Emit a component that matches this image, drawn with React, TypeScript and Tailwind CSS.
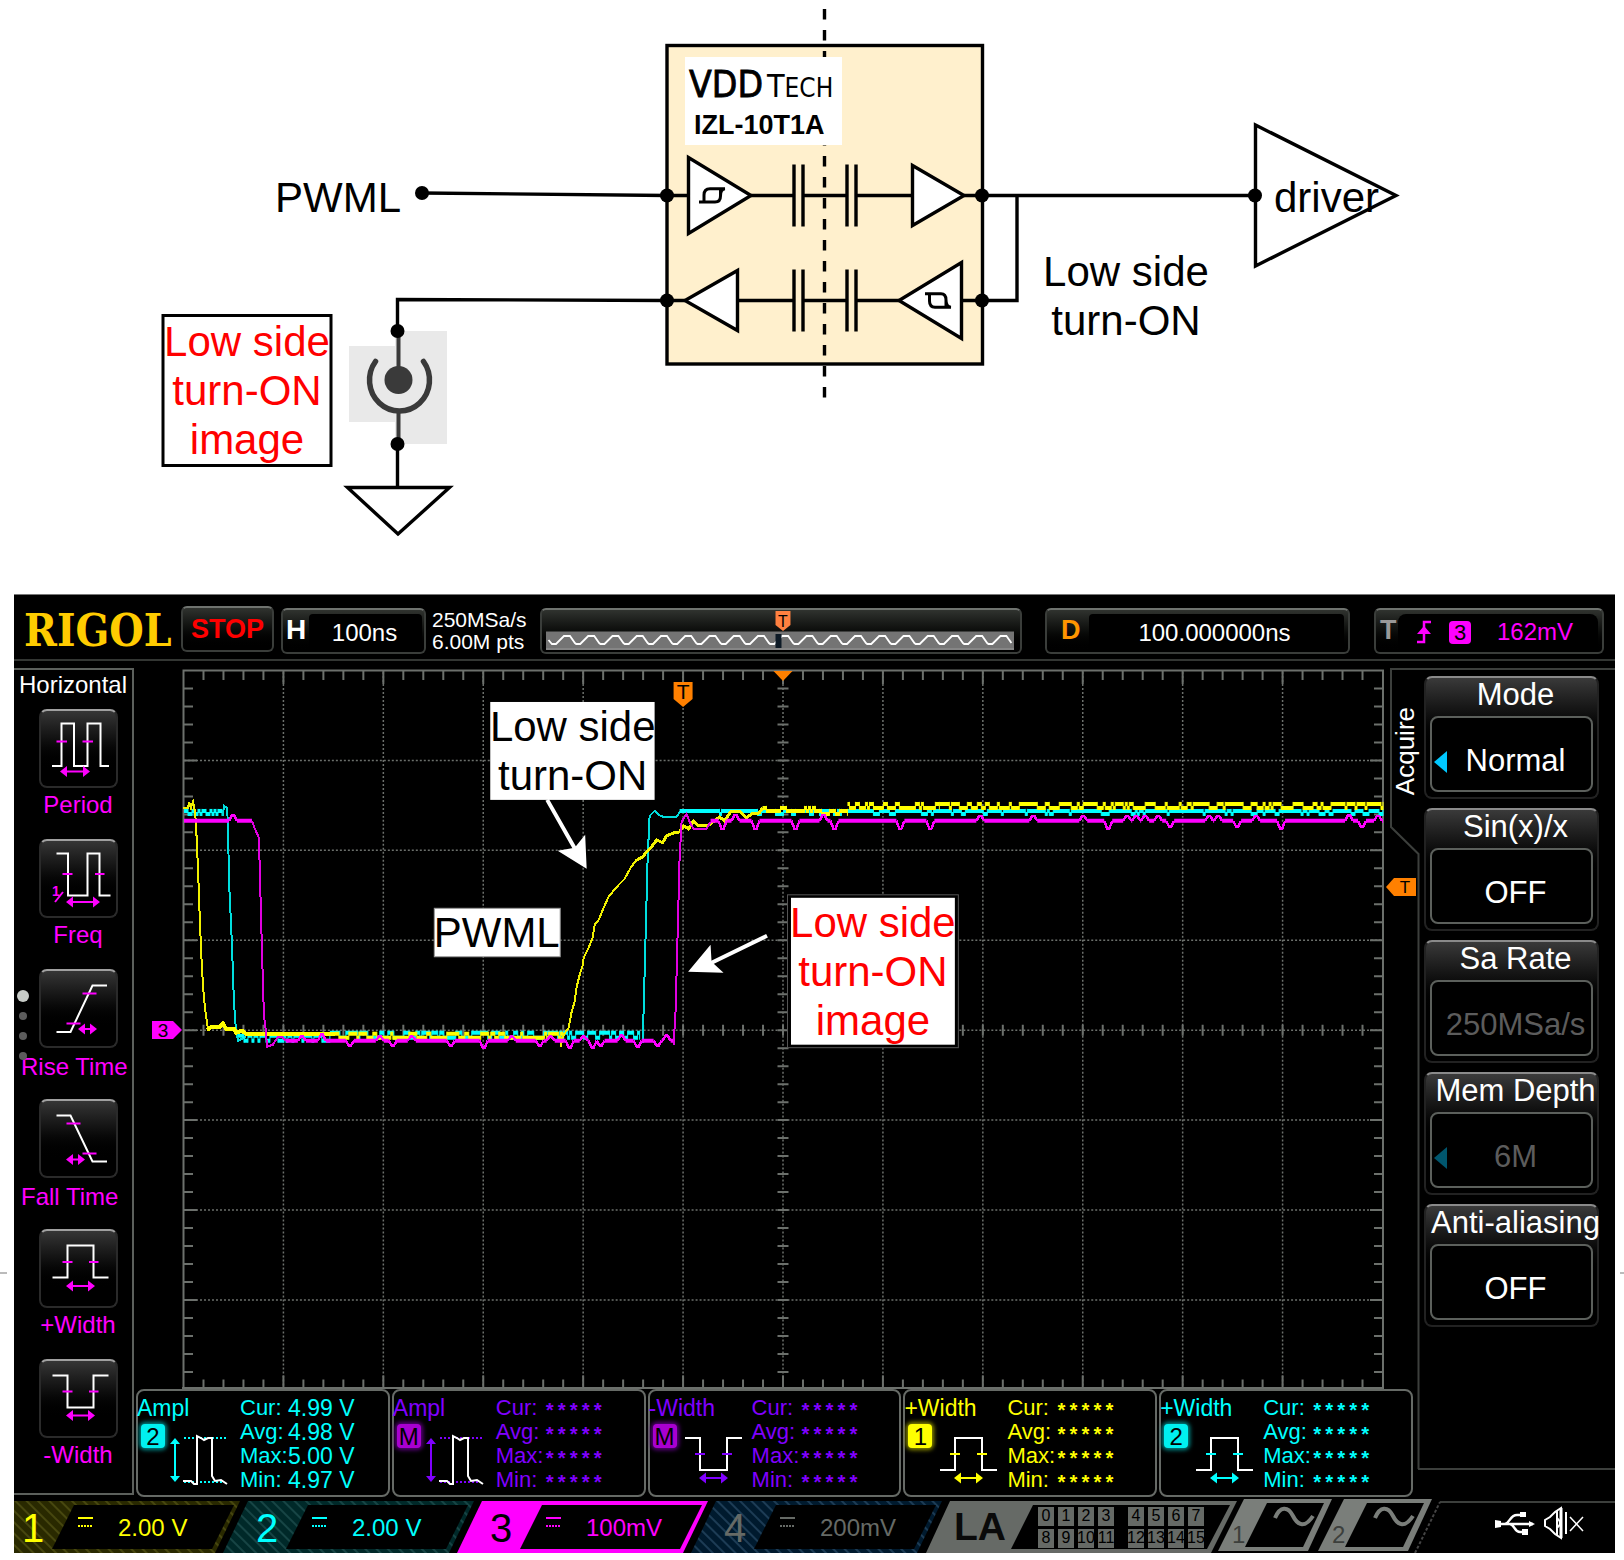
import React from "react";

const ARIAL = "font-['Liberation_Sans',Arial,sans-serif]";

/* ---------- circuit diagram ---------- */

function Node({ x, y }: { x: number; y: number }) {
  return <circle cx={x} cy={y} r={7} fill="#000" />;
}

function Capacitors({ y }: { y: number }) {
  return (
    <path d={`M794 ${y - 31}V${y + 31}M803 ${y - 31}V${y + 31}M847 ${y - 31}V${y + 31}M856 ${y - 31}V${y + 31}M803 ${y}H847`} />
  );
}

function Circuit() {
  return (
    <svg viewBox="0 0 1624 594" className={`block h-auto w-full ${ARIAL}`} role="img" aria-label="Isolator circuit">
      <rect x="667" y="45.5" width="315.5" height="318.5" fill="#fff0cd" stroke="#000" strokeWidth="3.4" />
      <path d="M824.5 9V398" stroke="#000" strokeWidth="3.4" strokeDasharray="10.5 10.5" />
      <rect x="685" y="57" width="157" height="88" fill="#fff" />
      <text x="689" y="97" fontSize="37" fill="#000" stroke="#000" strokeWidth="0.8" className="font-['DejaVu_Sans_Condensed',Roboto,sans-serif]">
        VDD
      </text>
      <text x="767" y="97" fontSize="32" fill="#000" className="font-['DejaVu_Sans_Condensed',Roboto,sans-serif]">
        T<tspan fontSize="26">ECH</tspan>
      </text>
      <text x="694" y="134" fontSize="27" fontWeight="700">IZL-10T1A</text>

      <g fill="none" stroke="#000" strokeWidth="3.4">
        <path d="M422 193L667 195.5H688M751 195.5H794M856 195.5H912M964 195.5H1255M1017 195.5V300.5H962M899 300.5H856M794 300.5H737M685 300.5H667L397.5 299.5V331M397.500 444V487" />
        <Capacitors y={195.500} />
        <Capacitors y={300.500} />
        <g fill="#fff">
          <path d="M688.500 157.500V233.500L751 195.500Z" />
          <path d="M912.500 165.500V225.500L964 195.500Z" />
          <path d="M737.500 270.500V330.500L685 300.500Z" />
          <path d="M961.500 262.500V338.500L899 300.500Z" />
          <path d="M347.500 487.500H449.500L398 534Z" />
        </g>
        <path d="M1255.500 125V266L1396 195.500Z" />
        <path strokeWidth="3" d="M699 202H715Q720.500 202 720.500 196Q720.500 189 725 188.700H710Q704 188.700 704 195V202M720.500 196V188.700" />
        <path strokeWidth="3" d="M925 293.700H941Q946 293.700 946 300Q946 307 951 307.300H935Q929.500 307 929.500 301V293.700M946 300V307.300" />
      </g>

      <rect x="349" y="346" width="47" height="76" fill="#e9e9e9" />
      <rect x="395" y="331" width="52" height="113" fill="#e9e9e9" />
      <g fill="none" stroke="#3a3a3a" strokeLinecap="round">
        <path d="M398.500 331V370M398.500 412V444" strokeWidth="4" />
        <path d="M375.500 361.500A30 31 0 1 0 423.500 361.500" strokeWidth="5.500" />
      </g>
      <circle cx="398.500" cy="380" r="14" fill="#3a3a3a" />

      <Node x={422} y={193} />
      <Node x={667} y={195.500} />
      <Node x={982} y={195.500} />
      <Node x={667} y={300.500} />
      <Node x={982} y={300.500} />
      <Node x={1255} y={195.500} />
      <Node x={397.500} y={331} />
      <Node x={397.500} y={444} />

      <rect x="163" y="315.500" width="168" height="150" fill="#fff" stroke="#000" strokeWidth="3" />
      <g fontSize="42">
        <text x="275" y="212">PWML</text>
        <text x="1274" y="212">driver</text>
        <g textAnchor="middle">
          <text x="1126" y="286">Low side</text>
          <text x="1126" y="335">turn-ON</text>
          <g fill="#f00">
            <text x="247" y="356">Low side</text>
            <text x="247" y="405">turn-ON</text>
            <text x="247" y="454">image</text>
          </g>
        </g>
      </g>
    </svg>
  );
}

/* ---------- waveform traces ---------- */

type Pt = [number, number];

function makeRandom(seed: number) {
  let s = seed;
  return () => {
    s = (s * 1103515245 + 12345) % 2147483648;
    return s / 2147483648;
  };
}

/* A noisy flat stretch: thick level segments joined by thin verticals. */
function noise(x0: number, x1: number, hi: number, lo: number, hiShare: number, seed: number, maxRun = 9): { thick: string; thin: string } {
  const rnd = makeRandom(seed);
  let x = x0;
  let up = true;
  let thick = "";
  let thin = "";
  while (x < x1) {
    const share = up ? hiShare : 1 - hiShare;
    const run = Math.min(x1 - x, 2 * Math.ceil(rnd() * rnd() * maxRun * share * 2 + 0.3));
    const y = up ? hi : lo;
    thick += `M${x} ${y}H${x + run}`;
    x += run;
    thin += `M${x} ${hi - 2}V${lo + 2}`;
    up = !up;
  }
  return { thick, thin };
}

function Flat({ color, ...p }: { color: string; x0: number; x1: number; hi: number; lo: number; share: number; seed: number; run?: number }) {
  const n = noise(p.x0, p.x1, p.hi, p.lo, p.share, p.seed, p.run);
  return (
    <g fill="none" stroke={color}>
      <path d={n.thick} strokeWidth="4" />
      <path d={n.thin} strokeWidth="1" />
    </g>
  );
}

function Edge({ pts, color, width = 2 }: { pts: Pt[]; color: string; width?: number }) {
  return <polyline points={pts.map((p) => p.join(",")).join(" ")} fill="none" stroke={color} strokeWidth={width} shapeRendering="crispEdges" />;
}

/* A level line with short spikes at the given places. */
function Spiky({ from, to, y, spikes }: { from: number; to: number; y: number; spikes: Pt[] }) {
  let flat = "";
  let peaks = "";
  let x = from;
  spikes.forEach(([sx, sy]) => {
    flat += `M${x} ${y}H${sx - 4}`;
    peaks += `M${sx - 4} ${y}L${sx - 1} ${sy}H${sx + 1}L${sx + 4} ${y}`;
    x = sx + 4;
  });
  flat += `M${x} ${y}H${to}`;
  return (
    <g fill="none" stroke="#f0f">
      <path d={flat} strokeWidth="4" />
      <path d={peaks} strokeWidth="2.500" shapeRendering="crispEdges" />
    </g>
  );
}

const yellowFall: Pt[] = [[183, 808], [188, 808], [189, 802], [191, 808], [193, 802], [195, 812], [196, 824], [198, 869], [200, 924], [202, 970], [204, 999], [206, 1016], [208, 1030]];
const yellowRise: Pt[] = [[561, 1047], [563, 1037], [566, 1032], [569, 1028], [572, 1012], [575, 1002], [577, 987], [580, 975], [583, 966], [584, 958], [589, 948], [593, 938], [595, 925], [599, 920], [604, 908], [609, 897], [613, 892], [620, 884], [625, 879], [631, 868], [636, 861]];
const yellowKnee: Pt[] = [[636, 861], [643, 857], [647, 852], [652, 847], [657, 840], [663, 843], [667, 836], [674, 833], [680, 832], [684, 826], [689, 829], [694, 821], [699, 826], [708, 826], [720, 817], [725, 821], [731, 812], [741, 812], [747, 818], [752, 814], [760, 813], [763, 808]];
const cyanFall: Pt[] = [[223, 816], [224, 806], [227, 808], [228, 824], [229, 880], [232, 945], [234, 1003], [236, 1030], [238, 1041], [246, 1037]];
const cyanRise: Pt[] = [[643, 1043], [644, 1011], [646, 936], [648, 859], [650, 816], [655, 811], [659, 815], [664, 817], [669, 817], [677, 817], [681, 811]];
const magentaFall: Pt[] = [[252, 821], [255, 829], [259, 838], [260, 877], [262, 950], [264, 1016], [266, 1032], [267, 1047], [273, 1045], [278, 1037], [282, 1037], [286, 1041]];
const magentaRise: Pt[] = [[674, 1045], [676, 1011], [678, 936], [680, 859], [682, 822], [687, 814], [690, 822], [694, 829], [707, 829], [711, 822]];
const highSpikes: Pt[] = [[723, 829], [736, 815], [756, 829], [796, 829], [824, 815], [835, 829], [901, 829], [931, 829], [981, 816], [1034, 816], [1084, 816], [1109, 829], [1128, 816], [1137, 816], [1146, 816], [1159, 816], [1171, 827], [1210, 816], [1219, 816], [1238, 827], [1257, 816], [1282, 829], [1350, 815], [1363, 827], [1379, 816]];
const lowSpikes: Pt[] = [[302, 1037], [322, 1035], [350, 1046], [380, 1037], [393, 1046], [412, 1037], [451, 1046], [484, 1048], [512, 1037], [540, 1046], [551, 1037], [570, 1048], [584, 1037], [593, 1048], [601, 1046], [622, 1036], [638, 1047], [658, 1046], [667, 1036]];

function Graticule() {
  let ticks = "";
  for (let x = 183.500 + 20, i = 1; i < 60; x += 20, i++) {
    const len = i % 5 === 0 ? 13 : 9;
    ticks += `M${x} 671V${671 + len}M${x} 1389V${1389 - len}M${x} 1025V1036`;
  }
  for (let y = 688, i = 1; i < 40; y += 18, i++) {
    const len = i % 5 === 0 ? 13 : 9;
    ticks += `M184 ${y + 0.500}H${184 + len}M1384 ${y + 0.500}H${1384 - len}M778 ${y + 0.500}H789`;
  }
  let dots = "";
  for (let i = 1; i < 12; i++) dots += `M${183.500 + i * 100} 672V1389`;
  for (let i = 1; i < 8; i++) dots += `M184 ${670.500 + i * 90}H1384`;
  return (
    <g fill="none" stroke="#6c706c">
      <path d={dots} strokeWidth="1.500" strokeDasharray="2 2" />
      <path d={ticks} strokeWidth="2" />
      <path d="M183.500 1390V670.500H1384V1390" strokeWidth="2" />
      <path d="M182 1389H1385" strokeWidth="3" />
    </g>
  );
}

function Plot() {
  return (
    <svg viewBox="182 668 1203 722" className={`block h-auto w-full min-w-0 flex-1 ${ARIAL}`} role="img" aria-label="Oscilloscope waveforms">
      <Graticule />
      <path d="M774 671H793L783.500 681Z" fill="#ff8000" />
      <path d="M674 682H693V699L683.500 707L674 699Z" fill="#ff8000" />
      <text x="683.500" y="699" fontSize="21" textAnchor="middle">T</text>

      <Flat color="#0ff" x0={184} x1={222} hi={811} lo={814} share={0.500} seed={5} run={5} />
      <Edge pts={cyanFall} color="#0dd" />
      <Flat color="#0ff" x0={238} x1={330} hi={1036} lo={1041} share={0.500} seed={9} />
      <Flat color="#0ff" x0={330} x1={640} hi={1033} lo={1038} share={0.500} seed={21} />
      <Edge pts={cyanRise} color="#0dd" />
      <Flat color="#0ff" x0={680} x1={1384} hi={811} lo={814} share={0.850} seed={33} run={14} />

      <Edge pts={yellowFall} color="#f0f000" />
      <Edge pts={[[207, 1030], [212, 1027], [220, 1027], [223, 1024], [226, 1029], [234, 1029], [236, 1033], [242, 1031], [246, 1034], [335, 1034]]} color="#ff0" width={4} />
      <Flat color="#ff0" x0={335} x1={563} hi={1034} lo={1038} share={0.350} seed={14} run={12} />
      <Edge pts={yellowRise} color="#f0f000" />
      <Edge pts={yellowKnee} color="#f4f400" width={3} />
      <Flat color="#ff0" x0={763} x1={816} hi={808} lo={811} share={0.400} seed={7} />
      <Flat color="#ff0" x0={816} x1={848} hi={811} lo={814} share={0.800} seed={3} run={14} />
      <Flat color="#ff0" x0={848} x1={940} hi={804} lo={808} share={0.350} seed={2} run={6} />
      <Flat color="#ff0" x0={940} x1={1384} hi={804} lo={808} share={0.600} seed={17} run={9} />

      <Spiky from={184} to={252} y={821} spikes={[[233, 815]]} />
      <Edge pts={magentaFall} color="#e000e0" />
      <Spiky from={286} to={674} y={1041} spikes={lowSpikes} />
      <Edge pts={magentaRise} color="#e000e0" />
      <Spiky from={711} to={1384} y={821} spikes={highSpikes} />

      <g stroke="#fff" strokeWidth="4" fill="#fff">
        <path d="M547.500 800L577 852M767.500 936L710 964" />
        <path stroke="none" d="M587 869L558 851L575 848L585.500 835ZM688.500 972L711 945L712 962L724 973Z" />
      </g>
      <rect x="490.500" y="702" width="164.500" height="98" fill="#fff" />
      <rect x="434.500" y="908.500" width="126" height="48.500" fill="#fff" stroke="#999" strokeWidth="1" />
      <rect x="788" y="895" width="171" height="153" fill="#000" stroke="#555" strokeWidth="1" />
      <rect x="791.500" y="898" width="164" height="147" fill="#fff" />
      <g fontSize="42" textAnchor="middle">
        <text x="573" y="741">Low side</text>
        <text x="573" y="790">turn-ON</text>
        <text x="497" y="947">PWML</text>
        <g fill="#f00">
          <text x="873.500" y="937">Low side</text>
          <text x="873.500" y="986">turn-ON</text>
          <text x="873.500" y="1035">image</text>
        </g>
      </g>
    </svg>
  );
}

/* ---------- header ---------- */

const PANEL = "rounded-md border-2 border-[#3a3d3a] border-t-[#6f736f] bg-gradient-to-b from-[#30332f] to-black";

function MemoryBar() {
  let wave = "M548.500 640";
  for (let i = 0; i < 19; i++) {
    const x = 550 + i * 24.300;
    wave += `L${x + 2} 644H${x + 6}L${x + 14} 636H${x + 20}L${x + 25} 643`;
  }
  return (
    <div className={`h-[46px] min-w-0 flex-1 ${PANEL}`}>
      <svg viewBox="542 610 479 42" preserveAspectRatio="none" className={`block h-full w-full ${ARIAL}`} role="img" aria-label="Memory position">
        <rect x="546" y="631.500" width="469" height="18.500" fill="#747474" />
        <path d="M546 649H1015" stroke="#999" strokeWidth="1" />
        <path d={wave} fill="none" stroke="#fff" strokeWidth="1.800" />
        <rect x="776" y="634" width="6" height="14" fill="#0d1a26" />
        <path d="M776 611H791V625L783.500 631L776 625Z" fill="#ff8040" />
        <text x="783.500" y="627" fontSize="16" textAnchor="middle">T</text>
      </svg>
    </div>
  );
}

function Header() {
  return (
    <header className="flex h-[66px] items-center border-b-2 border-[#333633] pt-2 pr-[11px] pl-[10px] text-[24px] text-white">
      <h1 className="w-[157px] font-['DejaVu_Serif_Condensed','DejaVu_Serif',serif] text-[44px] leading-none font-bold text-[#fc0]">RIGOL</h1>
      <button type="button" className={`mb-1 h-[46px] w-[93px] text-center text-[27px] leading-none font-bold text-[#f00] ${PANEL}`}>STOP</button>
      <div className={`ml-[7px] flex h-[46px] w-[145px] ${PANEL}`}>
        <span className="w-[26px] pl-[3px] text-[28px] leading-[40px] font-bold">H</span>
        <span className="mt-1 mr-0.5 flex-1 rounded bg-black pr-0.5 text-center leading-[38px]">100ns</span>
      </div>
      <div className="ml-[6px] w-[108px] text-[21px] leading-[22px] whitespace-nowrap">
        <div>250MSa/s</div>
        <div>6.00M pts</div>
      </div>
      <MemoryBar />
      <div className={`ml-[23px] flex h-[46px] w-[305px] ${PANEL}`}>
        <span className="w-[42px] pl-[14px] text-[27px] leading-[40px] font-bold text-[#ff9500]">D</span>
        <span className="mt-1 mr-1 flex-1 rounded bg-black pr-1 text-center leading-[38px]">100.000000ns</span>
      </div>
      <div className={`ml-[24px] flex h-[46px] w-[230px] ${PANEL}`}>
        <span className="w-[22px] pl-1 text-[27px] leading-[40px] font-bold text-[#999]">T</span>
        <div className="mt-1 mr-1 flex flex-1 items-center rounded-lg bg-black pb-0.5 pl-[18px] text-[#f0f]">
          <svg viewBox="0 0 16 24" className="h-6 w-4" aria-hidden="true">
            <path d="M1 22H8V2H15" fill="none" stroke="#f0f" strokeWidth="2.500" />
            <path d="M1 14L8 6L15 14Z" fill="#f0f" />
          </svg>
          <span className="ml-[17px] h-[23px] w-[22px] rounded bg-[#f0f] text-center text-[22px] leading-[23px] text-black">3</span>
          <span className="ml-[26px]">162mV</span>
        </div>
      </div>
    </header>
  );
}

/* ---------- left measurement menu ---------- */

function arrowH(x0: number, x1: number, y: number) {
  return `M${x0} ${y}L${x0 + 7} ${y - 5.500}V${y - 1}H${x1 - 7}V${y - 5.500}L${x1} ${y}L${x1 - 7} ${y + 5.500}V${y + 1}H${x0 + 7}V${y + 5.500}Z`;
}

type Measure = { label: string; wave: string; ticks: string; arrow: string; wide?: boolean };

const measures: Measure[] = [
  { label: "Period", wave: "M13 57H22.500V14.500H35V57H48.500V14.500H61.500V57H70", ticks: "M17.500 32.500H28M43.500 32.500H54", arrow: arrowH(21, 51, 62.500) },
  { label: "Freq", wave: "M17.500 14.500H29V56.500H48.500V14.500H60.500V56.500H71.500", ticks: "M23.500 35H33.500M56 35H65.500M24 53L16 63", arrow: arrowH(27, 61, 63) },
  { label: "Rise Time", wave: "M17.500 63H31.500L53.500 16.500H68", ticks: "M43.500 24.500H57.500M27.500 54.500H41.500", arrow: arrowH(39, 58, 60), wide: true },
  { label: "Fall Time", wave: "M17.500 16.500H31.500L53.500 62.500H68", ticks: "M27.500 24.500H41.500M43.500 54.500H57.500", arrow: arrowH(27, 46, 60.500), wide: true },
  { label: "+Width", wave: "M13.500 48.500H28.500V16.500H54.500V48.500H69.500", ticks: "M23.500 33H33.500M50 33H59.500", arrow: arrowH(27, 56, 57) },
  { label: "-Width", wave: "M13.500 16.500H28.500V48.500H54.500V16.500H69.500", ticks: "M23.500 32.500H33.500M50 32.500H59.500", arrow: arrowH(27, 56, 56.500) },
];

function Sidebar() {
  return (
    <aside className="relative mt-0.5 h-[827px] w-[120px] shrink-0 border-2 border-l-0 border-[#5c605c] pl-[5px]">
      <h2 className="text-[24px] leading-[30px] whitespace-nowrap text-white">Horizontal</h2>
      <ul className="mt-[9px] flex flex-col gap-[17px]">
        {measures.map((m) => (
          <li key={m.label} className="flex flex-col items-center pl-[5px]">
            <button type="button" aria-label={m.label} className="h-[79px] w-[79px] rounded-lg border-2 border-[#2a2a2a] border-t-[#a0a0a0] bg-gradient-to-b from-[#363636] to-black to-80%">
              <svg viewBox="2 2 75 75" className={`block h-full w-full ${ARIAL}`} aria-hidden="true">
                <path d={m.wave} fill="none" stroke="#fff" strokeWidth="2" />
                <path d={m.ticks} fill="none" stroke="#f0f" strokeWidth="2" />
                <path d={m.arrow} fill="#f0f" />
                {m.label === "Freq" && <text x="13" y="57" fontSize="14" fontWeight="700" fill="#f0f">1</text>}
              </svg>
            </button>
            <span className={m.wide ? "-ml-[3px] self-start pt-1 text-[24px] leading-[30px] whitespace-nowrap text-[#f0f]" : "text-[24px] leading-[34px] whitespace-nowrap text-[#f0f]"}>{m.label}</span>
          </li>
        ))}
      </ul>
      <div className="absolute top-[316px] left-[3px] grid w-3 auto-rows-[20px] place-items-center" aria-hidden="true">
        <i className="h-3 w-3 rounded-full bg-[#c8ccc8]" />
        <i className="h-2 w-2 rounded-full bg-[#5c5c5c]" />
        <i className="h-2 w-2 rounded-full bg-[#5c5c5c]" />
        <i className="h-2 w-2 rounded-full bg-[#5c5c5c]" />
      </div>
    </aside>
  );
}

/* ---------- right acquire menu ---------- */

const options = [
  { title: "Mode", value: "Normal", arrow: "#00c8ff", dim: false },
  { title: "Sin(x)/x", value: "OFF", arrow: "", dim: false },
  { title: "Sa Rate", value: "250MSa/s", arrow: "", dim: true },
  { title: "Mem Depth", value: "6M", arrow: "#00566e", dim: true },
  { title: "Anti-aliasing", value: "OFF", arrow: "", dim: false },
];

function AcquireTab() {
  return (
    <div className="relative w-[34px] shrink-0">
      <svg viewBox="0 0 34 802" className="absolute top-0 left-0 h-[802px] w-[34px] overflow-visible" aria-hidden="true">
        <path d="M36 1H7V159L34.500 186V801" fill="none" stroke="#3c3f3c" strokeWidth="2" />
      </svg>
      <span className="absolute top-[39px] left-[6px] rotate-180 text-[26px] leading-[30px] text-white [writing-mode:vertical-rl]">Acquire</span>
      <svg viewBox="0 0 30 20" className={`absolute top-[209px] left-[2px] h-5 w-[30px] ${ARIAL}`} role="img" aria-label="Trigger level">
        <path d="M0 10L8 1H30V19H8Z" fill="#ff8000" />
        <text x="19" y="16" fontSize="17" textAnchor="middle">T</text>
      </svg>
    </div>
  );
}

function AcquireMenu() {
  return (
    <nav aria-label="Acquire" className="flex h-[802px] w-[197px] shrink-0 flex-col gap-[9px] border-y-2 border-[#3c3f3c] pt-[6px] pl-[6px]">
      {options.map((o) => (
        <button key={o.title} type="button" className="flex h-[123px] w-[175px] shrink-0 flex-col items-center rounded-lg border-2 border-[#222] border-t-[#8a8a8a] bg-gradient-to-b from-[#3a3a3a] to-black to-60% px-1 text-[31px] text-white">
          <span className="flex h-[38px] w-full justify-center pl-2 leading-[34px] whitespace-nowrap">{o.title}</span>
          <span className="relative flex h-[76px] w-[163px] items-center justify-center rounded-lg border-2 border-[#5c605c] bg-black pt-[14px] pl-2">
            {o.arrow && (
              <svg viewBox="0 0 13 22" className="absolute top-[33px] left-0.5 h-[22px] w-[13px]" aria-hidden="true">
                <path d="M13 0V22L0 11Z" fill={o.arrow} />
              </svg>
            )}
            <span className={o.dim ? "text-[#5c5c5c]" : "text-white"}>{o.value}</span>
          </span>
        </button>
      ))}
    </nav>
  );
}

/* ---------- measurement cards ---------- */

type Card = { title: string; badge: string; color: string; glow: string; text: string; kind: "ampl" | "plus" | "minus"; values: string[] };

const stars = ["*****", "*****", "*****", "*****"];
const CYAN_GLOW = "bg-[#00f0f0] shadow-[0_0_4px_2px_#008c8c]";
const PURPLE_GLOW = "bg-[#a800d0] shadow-[0_0_4px_2px_#5c0080]";
const cards: Card[] = [
  { title: "Ampl", badge: "2", color: "#0ff", glow: CYAN_GLOW, text: "text-[#0ff]", kind: "ampl", values: ["4.99 V", "4.98 V", "5.00 V", "4.97 V"] },
  { title: "Ampl", badge: "M", color: "#8000ff", glow: PURPLE_GLOW, text: "text-[#8000ff]", kind: "ampl", values: stars },
  { title: "-Width", badge: "M", color: "#8000ff", glow: PURPLE_GLOW, text: "text-[#8000ff]", kind: "minus", values: stars },
  { title: "+Width", badge: "1", color: "#ff0", glow: "bg-[#ffff00] shadow-[0_0_4px_2px_#8c8c00]", text: "text-[#ff0]", kind: "plus", values: stars },
  { title: "+Width", badge: "2", color: "#0ff", glow: CYAN_GLOW, text: "text-[#0ff]", kind: "plus", values: stars },
];

function CardIcon({ kind, color }: { kind: Card["kind"]; color: string }) {
  return (
    <svg viewBox="0 0 64 56" className="h-14 w-16" aria-hidden="true">
      {kind === "ampl" ? (
        <g fill="none" strokeWidth="2">
          <path d="M15 9H58M15 53H54" stroke={color} strokeDasharray="2 2" />
          <path d="M14 52H22L25 55H28V7L32 9L35 11L39 9H43V47L46 52L52 51L58 55" stroke="#fff" />
          <path d="M6 9L11 15H7V47H11L6 53L1 47H5V15H1Z" fill={color} />
        </g>
      ) : (
        <g fill="none" strokeWidth="2">
          <path d={kind === "plus" ? "M4 41H19V9H46V41H61" : "M4 9H19V41H46V9H61"} stroke="#fff" />
          <path d="M14 25H24M41 25H51" stroke={color} />
          <path d={arrowH(18, 47, 49)} fill={color} />
        </g>
      )}
    </svg>
  );
}

function MeasureCard({ card }: { card: Card }) {
  const rows = ["Cur:", "Avg:", "Max:", "Min:"];
  const starred = card.values[0].startsWith("*");
  return (
    <section className={`flex h-[108px] min-w-0 flex-1 rounded-lg border-2 border-[#666a66] bg-black text-[23px] ${card.text}`}>
      <div className="w-[102px] shrink-0">
        <h3 className="-ml-px pt-[5px] leading-[24px]">{card.title}</h3>
        <div className="flex items-start pl-[3px]">
          <span className={`mt-1 h-[24px] w-[24px] rounded text-center text-[24px] leading-[25px] text-black ${card.glow}`}>{card.badge}</span>
          <span className="mt-[9px] ml-1"><CardIcon kind={card.kind} color={card.color} /></span>
        </div>
      </div>
      <dl className="pt-[5px] leading-[24px]">
        {rows.map((r, i) => (
          <div key={r} className="flex">
            <dt className="w-[48px] text-[22px]">{r}</dt>
            <dd className={starred ? "h-[24px] pt-[5px] font-['Liberation_Mono',monospace] text-[20px] leading-[24px] font-bold" : "whitespace-nowrap"}>{card.values[i]}</dd>
          </div>
        ))}
      </dl>
    </section>
  );
}

/* ---------- channel bar ---------- */

const channels = [
  { id: "1", value: "2.00 V", text: "text-[#ff0]", color: "#ff0", base: "#292900", line: "#47470f", on: false },
  { id: "2", value: "2.00 V", text: "text-[#0ff]", color: "#0ff", base: "#002929", line: "#174545", on: false },
  { id: "3", value: "100mV", text: "text-[#f0f]", color: "#f0f", base: "#f0f", line: "#f0f", on: true },
  { id: "4", value: "200mV", text: "text-[#666a66]", color: "#666a66", base: "#001a2e", line: "#1d3c55", on: false },
];

function ChannelTab({ ch }: { ch: (typeof channels)[number] }) {
  const hatch = `hatch${ch.id}`;
  return (
    <button type="button" aria-label={`Channel ${ch.id}`} className={`relative h-[52px] w-[234px] shrink-0 text-[24px] ${ch.text}`}>
      <svg viewBox="0 0 234 52" className="absolute inset-0 h-full w-full overflow-visible" aria-hidden="true">
        <defs>
          <pattern id={hatch} width="8" height="8" patternUnits="userSpaceOnUse" patternTransform="rotate(-45)">
            <rect width="8" height="8" fill={ch.base} />
            <rect width="2" height="8" fill={ch.line} />
          </pattern>
        </defs>
        <path d={ch.id === "1" ? "M0 0H226L201 52H0Z" : "M0 0H226L201 52H-25Z"} fill={`url(#${hatch})`} />
        <path d="M60 4H220L198 48H38Z" fill="#000" />
        <path d="M64 17H79" stroke={ch.color} strokeWidth="2" />
        <path d="M64 25H79" stroke={ch.color} strokeWidth="2" strokeDasharray="2 1" />
      </svg>
      <span className="relative flex h-[52px] items-start pl-2">
        <span className={ch.on ? "w-[96px] pt-[3px] text-left text-[40px] leading-[48px] text-black" : "w-[96px] pt-[3px] text-left text-[40px] leading-[48px]"}>{ch.id}</span>
        <span className="pt-[3px] leading-[48px]">{ch.value}</span>
      </span>
    </button>
  );
}

function LogicTab() {
  const bank = (start: number) => (
    <span className="grid grid-cols-4 gap-x-1 gap-y-[3px]">
      {[0, 1, 2, 3, 8, 9, 10, 11].map((n) => (
        <span key={n} className="flex h-[19px] w-4 items-center justify-center bg-[#666a66] text-[16px] leading-none text-black">{n + start}</span>
      ))}
    </span>
  );
  return (
    <button type="button" aria-label="Logic analyzer" className="relative h-[52px] w-[294px] shrink-0">
      <svg viewBox="0 0 294 52" className="absolute inset-0 h-full w-full overflow-visible" aria-hidden="true">
        <path d="M0 0H287L261 52H-24Z" fill="#666a66" />
        <path d="M83 4H280L257 48H61Z" fill="#000" />
      </svg>
      <span className="relative flex items-center pl-1">
        <span className="w-[84px] text-left text-[39px] leading-[46px] font-bold text-[#0a0a0a]">LA</span>
        <span className="flex gap-[14px]">
          {bank(0)}
          {bank(4)}
        </span>
      </span>
    </button>
  );
}

function GeneratorTab({ id }: { id: string }) {
  return (
    <button type="button" aria-label={`Generator ${id}`} className="relative h-[52px] w-[100px] shrink-0">
      <svg viewBox="0 0 100 52" className="absolute inset-0 h-full w-full overflow-visible" aria-hidden="true">
        <path d="M0 -2H88L64 50H-26Z" fill="#7a7e7a" />
        <path d="M23 2H80L59 46H1Z" fill="#000" />
        <path d="M31 17C36 5 44 5 49 15S61 27 69 15" fill="none" stroke="#7a7e7a" strokeWidth="4" />
      </svg>
      <span className="relative -ml-3 flex pt-4 text-[24px] leading-[32px] text-[#3c3f3c]">{id}</span>
    </button>
  );
}

function StatusIcons() {
  return (
    <div className="relative h-[52px] min-w-0 flex-1">
      <svg viewBox="0 0 30 52" className="absolute top-0 left-0 h-[52px] w-[30px] overflow-visible" aria-hidden="true">
        <path d="M-29 52L-4 1" fill="none" stroke="#444" strokeWidth="2" strokeDasharray="3 2" />
      </svg>
      <div className="-ml-1 flex h-full items-center justify-end gap-[9px] border-t-2 border-[#3c3f3c] pr-[31px] pb-2.5">
        <svg viewBox="0 0 40 24" className="h-6 w-10" role="img" aria-label="USB">
          <g fill="none" stroke="#fff" strokeWidth="2.500">
            <path d="M3 13H38M10 13C15 12 15 4 22 4H27M15 13C20 14 19 21 25 21H29" />
          </g>
          <g fill="#fff">
            <path d="M0 9L6 10V16L0 17ZM34 10L40 13L34 16Z" />
            <rect x="25" y="1" width="6" height="5" />
            <rect x="27" y="18" width="6" height="6" />
          </g>
        </svg>
        <svg viewBox="0 0 40 34" className="h-[34px] w-10" role="img" aria-label="Muted">
          <g fill="none" stroke="#fff" strokeWidth="2">
            <path d="M17 2L11 6L6 11L1 14V20L6 23L11 28L17 32ZM13 5V29M13 12Q19 17 13 22M22 6V28" />
            <path d="M26 11L39 25M39 11L26 25" strokeWidth="1.500" />
          </g>
          <path d="M17 2V32" stroke="#fff" strokeWidth="3" />
        </svg>
      </div>
    </div>
  );
}

/* ---------- page ---------- */

function Scope() {
  return (
    <main className={`relative border-t border-[#777] bg-black ${ARIAL}`}>
      <Header />
      <div className="flex pt-[5px]">
        <Sidebar />
        <div className="min-w-0 flex-1">
          <div className="flex pt-0.5">
            <div className="relative w-[48px] shrink-0">
              <svg viewBox="0 0 30 20" className={`absolute top-[352px] left-[18px] h-5 w-[30px] ${ARIAL}`} role="img" aria-label="Channel 3 level">
                <path d="M0 1H21L30 10L21 19H0Z" fill="#f0f" />
                <text x="11" y="17" fontSize="19" textAnchor="middle">3</text>
              </svg>
            </div>
            <Plot />
            <AcquireTab />
          </div>
          <div className="mr-[5px] ml-0.5 flex gap-0.5">
            {cards.map((c, i) => (
              <MeasureCard key={i} card={c} />
            ))}
          </div>
        </div>
        <div className="pt-0.5">
          <AcquireMenu />
        </div>
      </div>
      <footer className="mt-0.5 flex overflow-hidden pt-0.5">
        {channels.map((c) => (
          <ChannelTab key={c.id} ch={c} />
        ))}
        <LogicTab />
        <GeneratorTab id="1" />
        <GeneratorTab id="2" />
        <StatusIcons />
      </footer>
    </main>
  );
}

export default function App() {
  return (
    <div className="bg-white text-black">
      <Circuit />
      <div className="relative pr-[9px] pb-1.5 pl-[14px]">
        <i className="absolute top-[678px] left-0 h-0.5 w-[7px] bg-[#bbb]" aria-hidden="true" />
        <i className="absolute top-[678px] right-0 h-0.5 w-1 bg-[#bbb]" aria-hidden="true" />
        <Scope />
      </div>
    </div>
  );
}
